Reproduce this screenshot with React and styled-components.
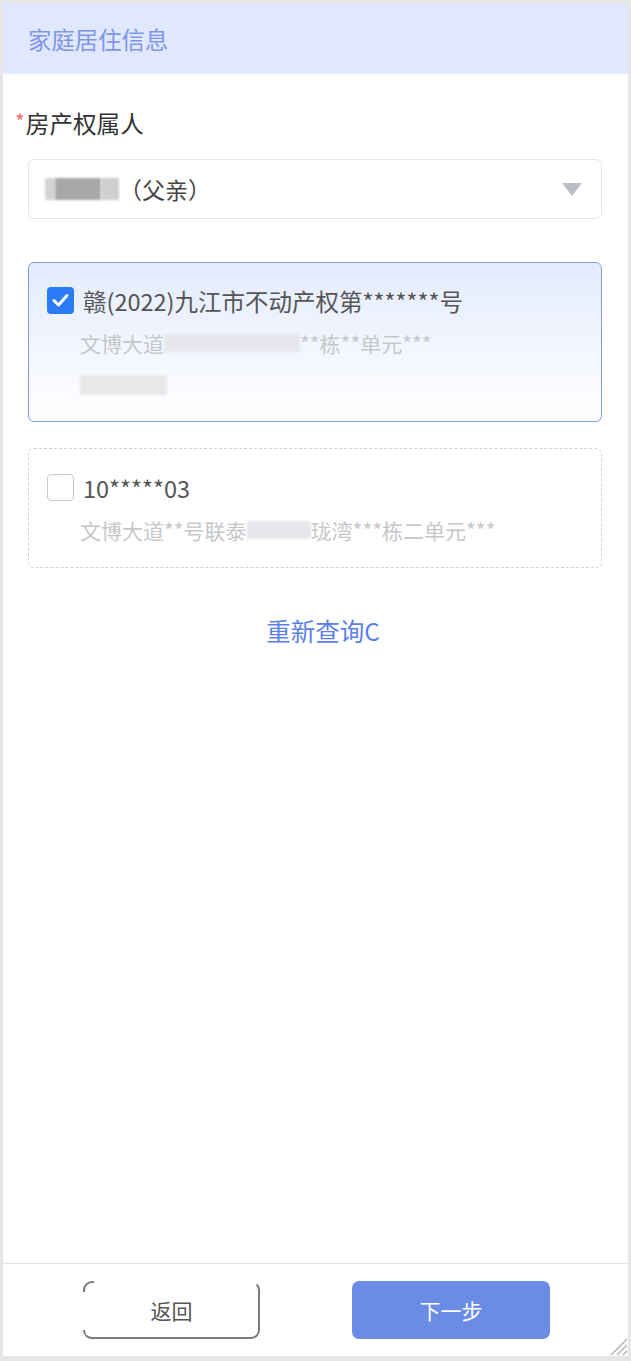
import styled, { createGlobalStyle } from "styled-components"

const GlobalStyle = createGlobalStyle`
  html, body {
    margin: 0;
    padding: 0;
    background: #ffffff;
  }
  body {
    font-family: "Noto Sans CJK SC", "Noto Sans", sans-serif;
  }
  * {
    box-sizing: border-box;
  }
`

const records = [
  {
    id: 1,
    checked: true,
    title: "赣(2022)九江市不动产权第*******号",
    address: ["文博大道", { blur: 136 }, "**栋**单元***"],
    extra: 87,
  },
  {
    id: 2,
    checked: false,
    title: "10*****03",
    address: ["文博大道**号联泰", { blur: 64 }, "珑湾***栋二单元***"],
  },
]

const CheckIcon = () => (
  <svg width="27" height="27" viewBox="0 0 27 27">
    <polyline points="7,13.5 11.5,18 20,8.5" fill="none" stroke="#ffffff" strokeWidth="3" strokeLinecap="round" strokeLinejoin="round" />
  </svg>
)

const Grip = () => (
  <svg width="20" height="20" viewBox="0 0 20 20">
    <line x1="19" y1="3" x2="3" y2="19" stroke="#b4b4b4" strokeWidth="1.5" />
    <line x1="19" y1="9" x2="9" y2="19" stroke="#b4b4b4" strokeWidth="1.5" />
    <line x1="19" y1="15" x2="15" y2="19" stroke="#b4b4b4" strokeWidth="1.5" />
  </svg>
)

const App = () => {
  return (
    <>
      <GlobalStyle />
      <Frame>
        <Header>家庭居住信息</Header>
        <Body>
          <FieldLabel>
            <Star>*</Star>房产权属人
          </FieldLabel>
          <Select>
            <SelectValue>
              <Blur $w={10} $c="#d4d4d4" />
              <Blur $w={46} $c="#a8a8aa" />
              <Blur $w={18} $c="#cfcfd0" />
              <span>（父亲）</span>
            </SelectValue>
            <Caret />
          </Select>

          {records.map((r) => (
            <Card key={r.id} $active={r.checked}>
              <TitleRow>
                <Box $checked={r.checked}>{r.checked && <CheckIcon />}</Box>
                <Title>{r.title}</Title>
              </TitleRow>
              <Detail>
                {r.address.map((part, i) =>
                  typeof part === "string" ? (
                    <span key={i}>{part}</span>
                  ) : (
                    <Blur key={i} $w={part.blur} $c="#e6e7ea" $h={18} />
                  )
                )}
              </Detail>
              {r.extra && (
                <Detail>
                  <Blur $w={r.extra} $c="#e8e8ea" $h={20} />
                </Detail>
              )}
            </Card>
          ))}

          <Requery>重新查询C</Requery>
        </Body>
        <Footer>
          <BackButton>返回</BackButton>
          <NextButton>下一步</NextButton>
        </Footer>
        <GripHolder>
          <Grip />
        </GripHolder>
      </Frame>
    </>
  )
}

export default App

const Frame = styled.div`
  position: relative;
  height: 100vh;
  display: flex;
  flex-direction: column;
  border: 3px solid #e6e6e6;
  border-bottom-width: 5px;
  background: #ffffff;
`

const Header = styled.div`
  height: 71px;
  flex-shrink: 0;
  display: flex;
  align-items: center;
  padding-left: 25px;
  background: #dfe8fd;
  color: #7f95ea;
  font-size: 23.4px;
`

const Body = styled.div`
  flex: 1;
  display: flex;
  flex-direction: column;
  padding: 34px 26px 0 25px;
`

const FieldLabel = styled.div`
  height: 30px;
  line-height: 30px;
  margin-left: -13px;
  font-size: 23.6px;
  color: #333333;
  display: flex;
  align-items: center;
`

const Star = styled.span`
  color: #f56c6c;
  font-size: 21px;
  margin-right: 1px;
  margin-top: -4px;
`

const Select = styled.div`
  margin-top: 21px;
  height: 60px;
  border: 1px solid #e3e5ea;
  border-radius: 6px;
  display: flex;
  align-items: center;
  justify-content: space-between;
  padding: 0 19px 0 16px;
`

const SelectValue = styled.div`
  display: flex;
  align-items: center;
  font-size: 23px;
  color: #444444;
`

const Blur = styled.span`
  display: inline-block;
  width: ${(p) => p.$w}px;
  height: ${(p) => p.$h || 22}px;
  background: ${(p) => p.$c};
  filter: blur(1px);
  vertical-align: middle;
`

const Caret = styled.span`
  width: 0;
  height: 0;
  border-left: 10px solid transparent;
  border-right: 10px solid transparent;
  border-top: 13px solid #b9bdc6;
`

const Card = styled.div`
  height: ${(p) => (p.$active ? 160 : 120)}px;
  margin-top: ${(p) => (p.$active ? 43 : 26)}px;
  border-radius: 6px;
  padding: ${(p) => (p.$active ? 24 : 25)}px 18px 0 18px;
  border: ${(p) => (p.$active ? "1px solid #7f9ef0" : "1.5px dashed #d3d3d6")};
  background: ${(p) =>
    p.$active ? "linear-gradient(180deg, #e3ebfd 0%, #ffffff 100%)" : "#ffffff"};
`

const TitleRow = styled.div`
  display: flex;
  align-items: center;
  gap: 9px;
  height: 27px;
`

const Box = styled.span`
  width: 27px;
  height: 27px;
  border-radius: 4px;
  flex-shrink: 0;
  display: flex;
  background: ${(p) => (p.$checked ? "#2c7bf6" : "#ffffff")};
  border: ${(p) => (p.$checked ? "none" : "1.5px solid #c9c9cc")};
`

const Title = styled.span`
  font-size: 23.5px;
  color: #555555;
  white-space: nowrap;
`

const Detail = styled.div`
  display: flex;
  align-items: center;
  height: 42px;
  margin-top: 8px;
  padding-left: 33px;
  font-size: 21px;
  color: #c6c7cb;
  white-space: nowrap;

  & + & {
    margin-top: 0;
  }
`

const Requery = styled.div`
  margin-top: 48px;
  height: 30px;
  line-height: 30px;
  text-align: center;
  padding-left: 16px;
  font-size: 24.5px;
  color: #5b80e8;
`

const Footer = styled.div`
  height: 93px;
  flex-shrink: 0;
  border-top: 1px solid #e2e2e2;
  display: flex;
  align-items: flex-start;
  padding: 17px 0 0 80px;
  gap: 92px;
`

const BackButton = styled.button`
  position: relative;
  width: 177px;
  height: 58px;
  background: #ffffff;
  border: 2px solid;
  border-color: transparent #7a7a7a #7a7a7a transparent;
  border-radius: 9px;
  font-family: inherit;
  font-size: 21px;
  color: #555555;
  padding: 0;

  &::before {
    content: "";
    position: absolute;
    left: -2px;
    top: -2px;
    width: 9px;
    height: 9px;
    border-top: 2px solid #7a7a7a;
    border-left: 2px solid #7a7a7a;
    border-top-left-radius: 9px;
  }

  &::after {
    content: "";
    position: absolute;
    left: -2px;
    bottom: -2px;
    width: 9px;
    height: 9px;
    border-left: 2px solid #7a7a7a;
    border-bottom-left-radius: 9px;
  }
`

const NextButton = styled.button`
  width: 198px;
  height: 58px;
  border: none;
  border-radius: 7px;
  background: #6a8ce5;
  color: #ffffff;
  font-family: inherit;
  font-size: 21px;
  padding: 0;
`

const GripHolder = styled.div`
  position: absolute;
  right: 0;
  bottom: 0;
  width: 20px;
  height: 20px;
  line-height: 0;
`
